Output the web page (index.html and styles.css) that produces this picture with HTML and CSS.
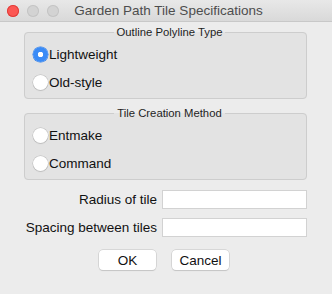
FILE: index.html
```html
<!DOCTYPE html>
<html lang="en">
<head>
    <meta charset="UTF-8">
    <meta name="viewport" content="width=device-width, initial-scale=1.0">
    <title>Garden Path Tile Specifications</title>
    <link rel="stylesheet" href="styles.css">
</head>
<body>
    <div class="window">
        <div class="titlebar">
            <div class="lights">
                <span class="light close"></span>
                <span class="light"></span>
                <span class="light"></span>
            </div>
            <div class="title">Garden Path Tile Specifications</div>
        </div>

        <div class="content">
            <fieldset class="group">
                <legend>Outline Polyline Type</legend>
                <label class="option"><input type="radio" name="pline" checked> Lightweight</label>
                <label class="option"><input type="radio" name="pline"> Old-style</label>
            </fieldset>

            <fieldset class="group">
                <legend>Tile Creation Method</legend>
                <label class="option"><input type="radio" name="method"> Entmake</label>
                <label class="option"><input type="radio" name="method"> Command</label>
            </fieldset>

            <div class="fields">
                <label for="radius">Radius of tile</label>
                <input id="radius" type="text">
                <label for="spacing">Spacing between tiles</label>
                <input id="spacing" type="text">
            </div>

            <div class="buttons">
                <button class="btn">OK</button>
                <button class="btn">Cancel</button>
            </div>
        </div>
    </div>
</body>
</html>
```

FILE: styles.css
```css
body {
    margin: 0;
    padding: 0;
    font-family: "Liberation Sans", Arial, sans-serif;
    font-size: 13.5px;
    color: #111111;
    background: #ffffff;
}

.window {
    width: 332px;
    height: 294px;
    background: #ececec;
    overflow: hidden;
}

.titlebar {
    height: 21px;
    border-bottom: 1px solid #c8c8c8;
    background: linear-gradient(#e8e8e8, #d9d9d9);
    display: flex;
    align-items: center;
    position: relative;
}

.lights {
    display: flex;
    gap: 8px;
    padding-left: 7px;
}

.light {
    width: 12px;
    height: 12px;
    border-radius: 50%;
    background: #d3d3d3;
    box-shadow: inset 0 0 0 1px #c4c4c4;
}

.light.close {
    background: #fc5753;
    box-shadow: inset 0 0 0 1px #df3e3a;
}

.title {
    flex: 1;
    text-align: center;
    color: #4d4d4d;
    font-size: 13.5px;
    padding-right: 54px;
}

.content {
    padding: 3px 25px 0 24px;
}

.group {
    margin: 0 0 7px 0;
    padding: 1px 0 2px 8px;
    border: 1px solid #cdcdcd;
    border-radius: 4px;
    background: #e3e3e3;
}

.group legend {
    margin: 0 auto;
    padding: 0 3px;
    font-size: 11.3px;
    line-height: 14px;
    color: #1e1e1e;
}

.option {
    display: flex;
    align-items: center;
    height: 28px;
    gap: 1px;
}

.option input {
    appearance: none;
    -webkit-appearance: none;
    margin: 0;
    width: 15px;
    height: 15px;
    border-radius: 50%;
    background: #ffffff;
    box-shadow: 0 0 0 0.5px #b9b9b9, 0 1px 1px rgba(0, 0, 0, 0.12);
}

.option input:checked {
    background: radial-gradient(circle, #ffffff 0 2.5px, #3a8bf6 3px);
    box-shadow: 0 0 0 0.5px #2f7de8;
}

.fields {
    margin-top: 10px;
    display: grid;
    grid-template-columns: 1fr 145px;
    column-gap: 5px;
    row-gap: 9px;
    align-items: center;
}

.fields label {
    text-align: right;
}

.fields input {
    box-sizing: border-box;
    height: 19px;
    margin: 0;
    border: 1px solid #d2d2d2;
    background: #ffffff;
    font: inherit;
}

.buttons {
    margin-top: 13px;
    display: flex;
    justify-content: center;
    gap: 16px;
    padding-right: 3px;
}

.btn {
    width: 57px;
    height: 20px;
    padding: 0;
    font-family: inherit;
    font-size: 13.5px;
    color: #111111;
    background: #ffffff;
    border: none;
    border-radius: 4px;
    box-shadow: 0 0 0 0.5px #c2c2c2, 0 1px 1px rgba(0, 0, 0, 0.15);
}
```
